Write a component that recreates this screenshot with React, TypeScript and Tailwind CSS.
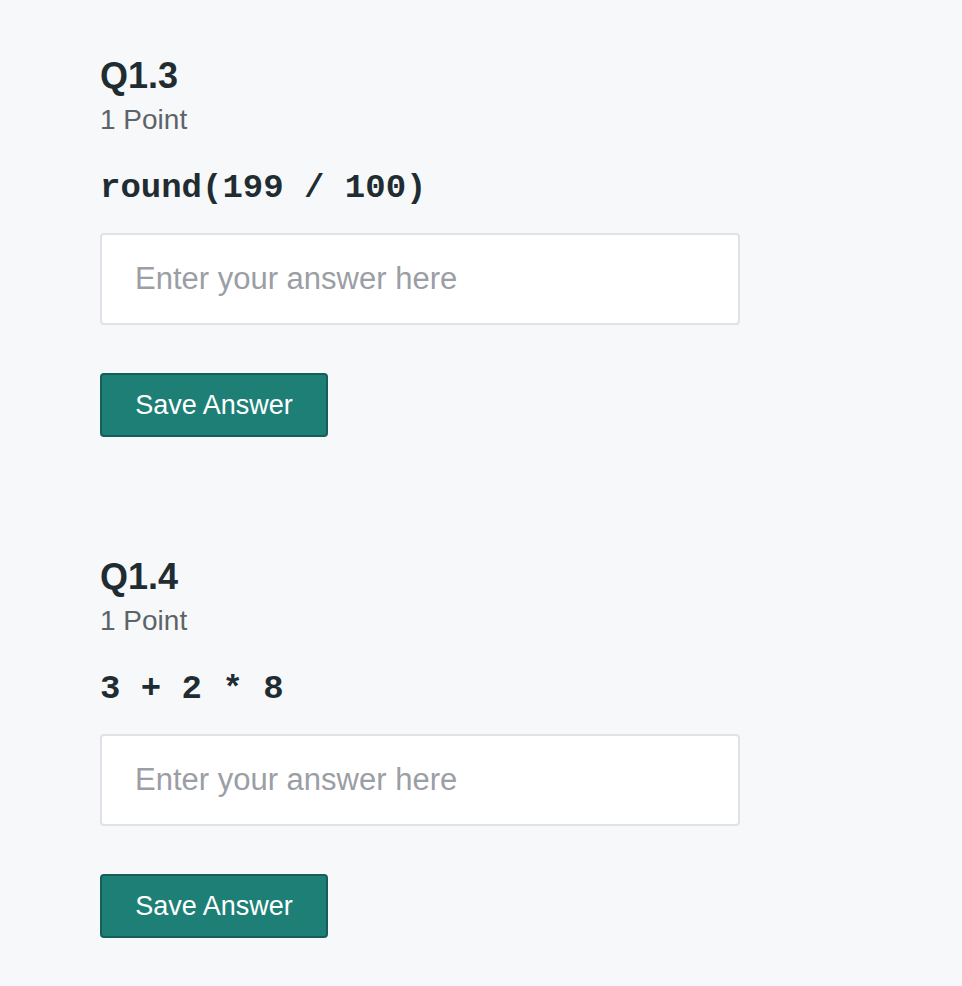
const questions = [
  { id: "Q1.3", points: "1 Point", code: "round(199 / 100)" },
  { id: "Q1.4", points: "1 Point", code: "3 + 2 * 8" },
];

function Question({ id, points, code }: { id: string; points: string; code: string }) {
  return (
    <section className="flex flex-col items-start">
      <h2 className="text-[36px] leading-[40px] font-bold text-[#1f2d33]">{id}</h2>
      <p className="mt-2 text-[28px] leading-[32px] text-[#5d6468]">{points}</p>
      <pre className="mt-8 text-[34px] leading-[40px] font-bold text-[#1f2d33] font-['Liberation_Mono',monospace]">
        {code}
      </pre>
      <input
        type="text"
        placeholder="Enter your answer here"
        className="mt-[25px] w-[640px] h-[92px] rounded-[4px] border-2 border-[#e1e2e5] bg-white px-[33px] text-[31px] text-[#1f2d33] placeholder:text-[#9b9ea5] outline-none"
      />
      <button className="mt-12 w-[228px] h-[64px] rounded-[4px] border-2 border-[#175e58] bg-[#1d7f76] text-[27px] text-white">
        Save Answer
      </button>
    </section>
  );
}

export default function App() {
  return (
    <main className="min-h-screen bg-[#f7f8fa] pl-[100px] pt-[56px] font-['Liberation_Sans',Arial,sans-serif]">
      <div className="flex flex-col gap-[120px]">
        {questions.map((q) => (
          <Question key={q.id} {...q} />
        ))}
      </div>
    </main>
  );
}
